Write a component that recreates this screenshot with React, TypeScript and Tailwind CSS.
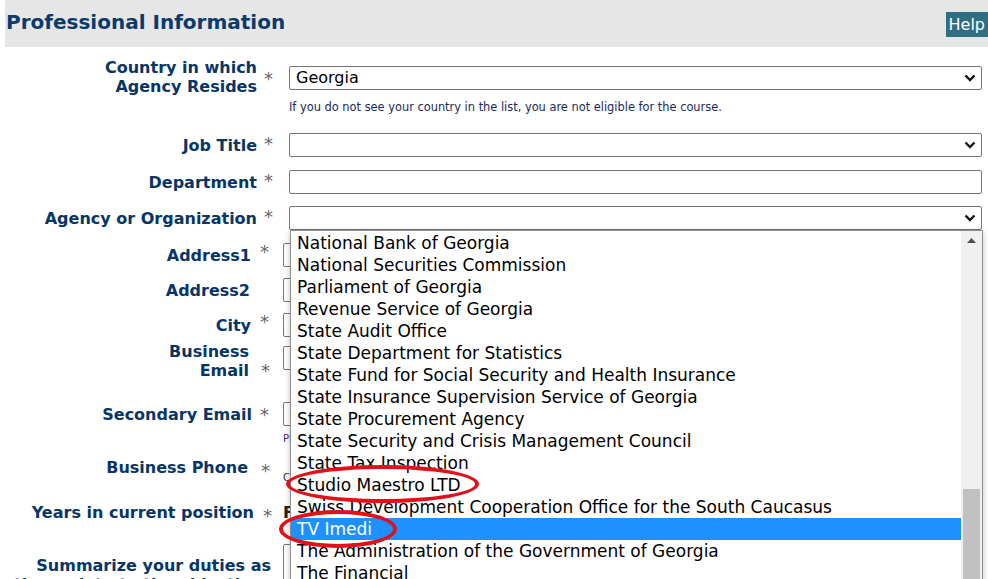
import React from "react";

const items = [
  "National Bank of Georgia",
  "National Securities Commission",
  "Parliament of Georgia",
  "Revenue Service of Georgia",
  "State Audit Office",
  "State Department for Statistics",
  "State Fund for Social Security and Health Insurance",
  "State Insurance Supervision Service of Georgia",
  "State Procurement Agency",
  "State Security and Crisis Management Council",
  "State Tax Inspection",
  "Studio Maestro LTD",
  "Swiss Development Cooperation Office for the South Caucasus",
  "TV Imedi",
  "The Administration of the Government of Georgia",
  "The Financial",
];

function Chevron() {
  return (
    <svg width="12" height="8" viewBox="0 0 12 8" className="shrink-0">
      <path d="M1.5 1.5 L6 6 L10.5 1.5" fill="none" stroke="#111" strokeWidth="2.4" />
    </svg>
  );
}

function Select({ value }: { value?: string }) {
  return (
    <div className="h-[24px] border border-[#767676] rounded-[2px] flex items-center justify-between pl-[6px] pr-[5px] text-[16px] text-black bg-white">
      <span>{value ?? ""}</span>
      <Chevron />
    </div>
  );
}

function Input() {
  return <div className="h-[24px] border border-[#767676] rounded-[2px] bg-white" />;
}

function Label({ children }: { children: React.ReactNode }) {
  return <div className="text-right font-bold text-[16px] leading-[19px] text-[#073567]">{children}</div>;
}

function Star() {
  return <span className="text-[#666] text-[18px] leading-none">*</span>;
}

export default function App() {
  return (
    <div className="relative w-[988px] h-[579px] overflow-hidden bg-white font-['DejaVu_Sans',Verdana,sans-serif]">
      {/* Header */}
      <div className="ml-[5px] h-[47px] bg-[#e6e6e6] flex items-start justify-between">
        <h1 className="mt-[9px] ml-[1px] text-[20px] leading-[26px] font-bold text-[#0b3a6d]">Professional Information</h1>
        <div className="mt-[12px] h-[25px] px-[3px] bg-[#2f6f81] text-white text-[16px] leading-[25px]">Help</div>
      </div>

      {/* Country */}
      <div className="flex mt-[11px]">
        <div className="w-[257px]">
          <Label>
            Country in which
            <br />
            Agency Resides
          </Label>
        </div>
        <div className="w-[32px] pl-[7px] pt-[10px]"><Star /></div>
        <div className="w-[693px] pt-[8px]">
          <Select value="Georgia" />
          <div className="mt-[11px] text-[11.4px] leading-[13px] text-[#1a2a5a] whitespace-nowrap">
            If you do not see your country in the list, you are not eligible for the course.
          </div>
        </div>
      </div>

      {/* Job Title */}
      <div className="flex mt-[19px] items-center">
        <div className="w-[257px]"><Label>Job Title</Label></div>
        <div className="w-[32px] pl-[7px] -mt-[1px]"><Star /></div>
        <div className="w-[693px]"><Select /></div>
      </div>

      {/* Department */}
      <div className="flex mt-[13px] items-center">
        <div className="w-[257px]"><Label>Department</Label></div>
        <div className="w-[32px] pl-[7px] -mt-[1px]"><Star /></div>
        <div className="w-[693px]"><Input /></div>
      </div>

      {/* Agency */}
      <div className="flex mt-[12px] items-center">
        <div className="w-[257px]"><Label>Agency or Organization</Label></div>
        <div className="w-[32px] pl-[7px] -mt-[1px]"><Star /></div>
        <div className="w-[693px]"><Select /></div>
      </div>

      {/* Address1 */}
      <div className="flex mt-[13px] items-center">
        <div className="w-[251px]"><Label>Address1</Label></div>
        <div className="w-[32px] pl-[9px] -mt-[4px]"><Star /></div>
        <div className="w-[699px]"><Input /></div>
      </div>

      {/* Address2 */}
      <div className="flex mt-[11px] items-center">
        <div className="w-[250px]"><Label>Address2</Label></div>
        <div className="w-[33px]" />
        <div className="w-[699px]"><Input /></div>
      </div>

      {/* City */}
      <div className="flex mt-[11px] items-center">
        <div className="w-[251px]"><Label>City</Label></div>
        <div className="w-[32px] pl-[9px] -mt-[4px]"><Star /></div>
        <div className="w-[699px]"><Input /></div>
      </div>

      {/* Business Email */}
      <div className="flex mt-[5px]">
        <div className="w-[249px]">
          <Label>
            Business
            <br />
            Email
          </Label>
        </div>
        <div className="w-[34px] pl-[12px] pt-[18px]"><Star /></div>
        <div className="w-[699px] pt-[4px]"><Input /></div>
      </div>

      {/* Secondary Email */}
      <div className="flex mt-[18px]">
        <div className="w-[252px] pt-[3px]"><Label>Secondary Email</Label></div>
        <div className="w-[31px] pl-[8px] pt-[2px]"><Star /></div>
        <div className="w-[699px]">
          <Input />
          <div className="mt-[6px] text-[10px] leading-[13px] text-[#4b2a7a]">Please provide an alternate email address.</div>
        </div>
      </div>

      {/* Business Phone */}
      <div className="flex mt-[10px]">
        <div className="w-[248px] pt-[3px]"><Label>Business Phone</Label></div>
        <div className="w-[35px] pl-[13px] pt-[5px]"><Star /></div>
        <div className="w-[699px] pt-[16px]">
          <div className="text-[10px] leading-[13px] text-[#333]">Country code and number</div>
        </div>
      </div>

      {/* Years */}
      <div className="flex mt-[19px]">
        <div className="w-[254px]"><Label>Years in current position</Label></div>
        <div className="w-[29px] pl-[9px] pt-[2px]"><Star /></div>
        <div className="w-[699px] text-[16px] leading-[19px] font-bold text-[#222]">Fewer than 1 year</div>
      </div>

      {/* Summarize */}
      <div className="flex mt-[27px]">
        <div className="w-[271px]">
          <Label>
            Summarize your duties as
            <br />
            they relate to the objectives of
          </Label>
        </div>
        <div className="w-[12px]" />
        <div className="w-[699px] h-[80px] -mt-[12px] border border-[#767676] rounded-[2px]" />
      </div>

      {/* Open dropdown list */}
      <div className="absolute left-[290px] top-[230px] w-[693px] h-[360px] bg-white border border-[#8f8f8f] shadow-[0_2px_6px_rgba(0,0,0,0.25)] flex">
        <div className="flex-1 pt-[1px] overflow-hidden">
          {items.map((t) => (
            <div
              key={t}
              className={
                t === "TV Imedi"
                  ? "h-[22px] pl-[6px] text-[17px] leading-[22px] whitespace-nowrap bg-[#1e90ff] text-white"
                  : "h-[22px] pl-[6px] text-[17px] leading-[22px] whitespace-nowrap text-black"
              }
            >
              {t}
            </div>
          ))}
        </div>
        <div className="w-[21px] bg-[#f0f0f0] flex flex-col items-center">
          <div className="h-[22px] flex items-center justify-center">
            <svg width="9" height="5" viewBox="0 0 9 5">
              <path d="M0 5 L4.5 0 L9 5 Z" fill="#505050" />
            </svg>
          </div>
          <div className="mt-[240px] w-[17px] h-[120px] bg-[#c1c1c1]" />
        </div>
      </div>

      {/* Red annotation ellipses */}
      <div className="absolute left-[286px] top-[465px] w-[193px] h-[38px] rounded-[50%] border-[4px] border-[#e3101c]" />
      <div className="absolute left-[279px] top-[510px] w-[118px] h-[38px] rounded-[50%] border-[4px] border-[#e3101c]" />
    </div>
  );
}
